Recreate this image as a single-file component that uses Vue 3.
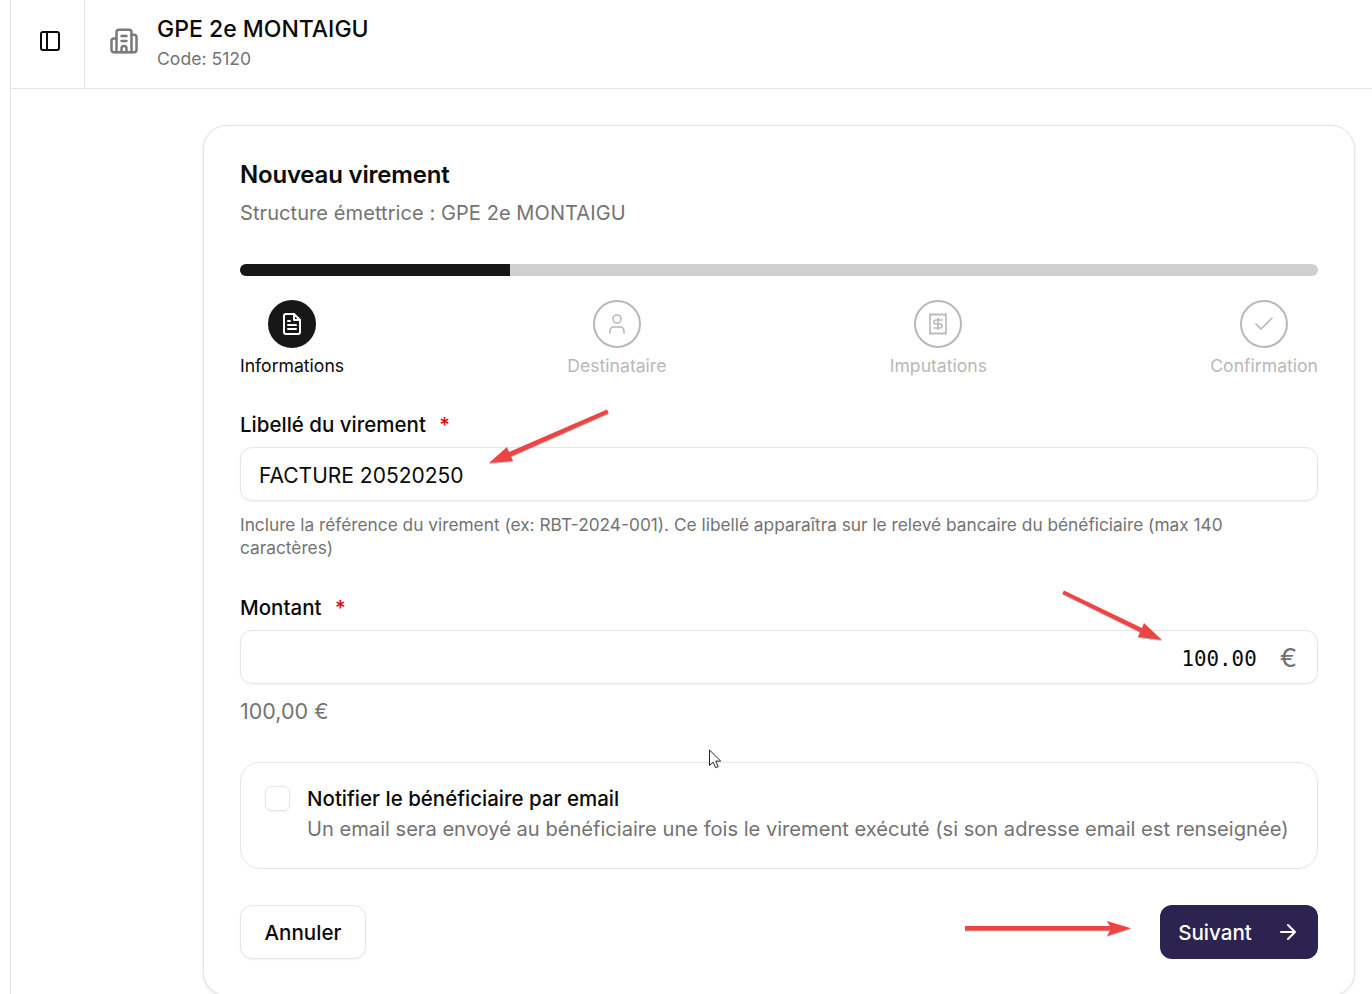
<template>
  <div class="page">
    <div class="main">
      <header class="topbar">
        <button class="toggle" type="button" aria-label="Menu">
          <svg viewBox="0 0 24 24" fill="none" stroke="currentColor" stroke-width="2" stroke-linejoin="round">
            <rect x="3" y="3" width="18" height="18" rx="2" />
            <path d="M9 3v18" />
          </svg>
        </button>
        <div class="structure">
          <svg class="structure-icon" viewBox="0 0 24 24" fill="none" stroke="currentColor" stroke-width="2" stroke-linecap="round" stroke-linejoin="round">
            <path d="M10 12h4" />
            <path d="M10 8h4" />
            <path d="M14 21v-3a2 2 0 0 0-4 0v3" />
            <path d="M6 10H4a2 2 0 0 0-2 2v7a2 2 0 0 0 2 2h16a2 2 0 0 0 2-2V9a2 2 0 0 0-2-2h-2" />
            <path d="M6 21V5a2 2 0 0 1 2-2h8a2 2 0 0 1 2 2v16" />
          </svg>
          <div>
            <div class="structure-name">GPE 2e MONTAIGU</div>
            <div class="structure-code">Code: 5120</div>
          </div>
        </div>
      </header>

      <div class="content">
        <section class="card">
          <h1>Nouveau virement</h1>
          <p class="subtitle">Structure émettrice : GPE 2e MONTAIGU</p>

          <div class="progress">
            <div class="progress-fill" :style="{ width: progress + '%' }"></div>
          </div>

          <div class="steps">
            <div v-for="(step, i) in steps" :key="step.label" class="step" :class="{ active: i === current }">
              <span class="step-circle">
                <svg viewBox="0 0 24 24" fill="none" stroke="currentColor" stroke-linecap="round" stroke-linejoin="round">
                  <path v-for="d in step.paths" :key="d" :d="d" />
                </svg>
              </span>
              <span class="step-label">{{ step.label }}</span>
            </div>
          </div>

          <div class="field first">
            <label>Libellé du virement <span class="req">*</span></label>
            <div class="input">FACTURE 20520250</div>
            <p class="hint">Inclure la référence du virement (ex: RBT-2024-001). Ce libellé apparaîtra sur le relevé bancaire du bénéficiaire (max 140 caractères)</p>
          </div>

          <div class="field amount">
            <label>Montant <span class="req">*</span></label>
            <div class="input input-amount">
              <span class="amount-value">100.00</span>
              <span class="euro">€</span>
            </div>
            <p class="amount-preview">100,00 €</p>
          </div>

          <div class="notify">
            <span class="checkbox"></span>
            <div>
              <div class="notify-title">Notifier le bénéficiaire par email</div>
              <div class="notify-desc">Un email sera envoyé au bénéficiaire une fois le virement exécuté (si son adresse email est renseignée)</div>
            </div>
          </div>

          <div class="actions">
            <button class="btn-cancel" type="button">Annuler</button>
            <button class="btn-next" type="button">
              Suivant
              <svg viewBox="0 0 24 24" fill="none" stroke="currentColor" stroke-width="2" stroke-linecap="round" stroke-linejoin="round">
                <path d="M5 12h14M12 5l7 7-7 7" />
              </svg>
            </button>
          </div>
        </section>
      </div>
    </div>

    <!-- annotations posees sur la capture -->
    <svg class="marks" viewBox="0 0 1372 994">
      <g class="arrows" fill="#ef4444">
        <path d="M607 409.5l1.7 3.7-97.7 43.3 2 4.5-24 2 18-16 2 5z" />
        <path d="M1064 590.5l-1.7 3.2 77.7 38.3-2 5 24 3-18-17-2 5z" />
        <path d="M965 926h145l-3-5 24 7.3-24 7.7 3-5.5H965z" />
      </g>
      <path d="M709.5 750v15.5l3.6-3.4 2.5 5.6 2.6-1.1-2.5-5.5h5z" fill="#fff" stroke="#222" stroke-width="1" stroke-linejoin="round" />
    </svg>
  </div>
</template>

<script setup>
const current = 0
const progress = 25

const steps = [
  {
    label: 'Informations',
    paths: [
      'M14 2H6a2 2 0 0 0-2 2v16a2 2 0 0 0 2 2h12a2 2 0 0 0 2-2V8z',
      'M14 2v6h6',
      'M10 9H8',
      'M16 13H8',
      'M16 17H8'
    ]
  },
  {
    label: 'Destinataire',
    paths: ['M12 3a4 4 0 1 0 0 8 4 4 0 0 0 0-8z', 'M19 21v-2a4 4 0 0 0-4-4H9a4 4 0 0 0-4 4v2']
  },
  {
    label: 'Imputations',
    paths: [
      'M4 2v20l2-1 2 1 2-1 2 1 2-1 2 1 2-1 2 1V2l-2 1-2-1-2 1-2-1-2 1-2-1-2 1z',
      'M16 8h-6a2 2 0 1 0 0 4h4a2 2 0 1 1 0 4H8',
      'M12 17.5v-11'
    ]
  },
  {
    label: 'Confirmation',
    paths: ['M20 6 9 17l-5-5']
  }
]
</script>

<style>
html,
body {
  margin: 0;
  background: #fff;
  overflow: hidden;
}
</style>

<style scoped>
.page {
  position: relative;
  width: 1372px;
  height: 994px;
  overflow: hidden;
  background: #fff;
  padding-left: 10px;
  box-sizing: border-box;
  font-family: Inter, "Liberation Sans", sans-serif;
  color: #0a0a0a;
}

.main {
  height: 100%;
  border-left: 1px solid #e5e5e5;
}

.topbar {
  display: flex;
  height: 89px;
  box-sizing: border-box;
  border-bottom: 1px solid #e5e5e5;
}

.toggle {
  width: 74px;
  padding: 0 0 6px 4px;
  border: 0;
  border-right: 1px solid #e5e5e5;
  background: transparent;
  color: #0a0a0a;
  display: grid;
  place-items: center;
}

.toggle svg {
  width: 24px;
  height: 24px;
}

.structure {
  display: flex;
  align-items: center;
  gap: 18px;
  padding: 0 0 2px 24px;
}

.structure-icon {
  width: 30px;
  height: 30px;
  color: #7a7a7a;
  margin-bottom: 4px;
}

.structure-name {
  font-size: 23px;
  line-height: 32px;
  font-weight: 500;
}

.structure-code {
  font-size: 17.6px;
  line-height: 28px;
  color: #737373;
}

.content {
  padding: 36px 17px 0 192px;
}

.card {
  width: 1152px;
  box-sizing: border-box;
  padding: 35px 36px 36px;
  border: 1px solid #e5e5e5;
  border-radius: 24px;
  background: #fff;
  box-shadow: 0 1px 3px rgba(0, 0, 0, 0.1);
}

h1 {
  margin: 0;
  font-size: 24px;
  line-height: 28px;
  font-weight: 600;
  letter-spacing: -0.2px;
}

.subtitle {
  margin: 10px 0 0;
  font-size: 20px;
  line-height: 28px;
  letter-spacing: 0.08px;
  color: #737373;
}

.progress {
  margin-top: 37px;
  height: 12px;
  border-radius: 6px;
  background: #cfcfcf;
  overflow: hidden;
}

.progress-fill {
  height: 100%;
  background: #171717;
}

.steps {
  display: flex;
  justify-content: space-between;
  margin-top: 24px;
}

.step {
  display: flex;
  flex-direction: column;
  align-items: center;
  gap: 4px;
  color: #b8b8b8;
}

.step-circle {
  width: 48px;
  height: 48px;
  box-sizing: border-box;
  border: 2.5px solid #b8b8b8;
  border-radius: 50%;
  display: grid;
  place-items: center;
}

.step-circle svg {
  width: 24px;
  height: 24px;
  stroke-width: 1.6;
}

.step.active {
  color: #0a0a0a;
}

.step.active .step-circle {
  border-color: #171717;
  background: #171717;
  color: #fff;
}

.step.active svg {
  stroke-width: 2;
}

.step-label {
  font-size: 17.6px;
  line-height: 28px;
}

.field.first {
  margin-top: 31px;
}

.field.amount {
  margin-top: 35px;
}

label {
  display: block;
  font-size: 20.5px;
  line-height: 28px;
  font-weight: 500;
}

.req {
  margin-left: 8px;
  color: #e7000b;
}

.input {
  margin-top: 8px;
  height: 54px;
  box-sizing: border-box;
  padding: 2px 20px 0 18px;
  border: 1px solid #e5e5e5;
  border-radius: 12px;
  box-shadow: 0 1px 2px rgba(0, 0, 0, 0.05);
  display: flex;
  align-items: center;
  font-size: 21px;
}

.input-amount {
  justify-content: flex-end;
}

.amount-value {
  padding-top: 2px;
  font-family: "DejaVu Sans Mono", monospace;
  font-size: 20.8px;
}

.euro {
  margin-left: 23px;
  padding-bottom: 2px;
  font-size: 26px;
  color: #737373;
}

.hint {
  margin: 12px 0 0;
  font-size: 17.3px;
  line-height: 23px;
  color: #737373;
}

.amount-preview {
  margin: 12px 0 0;
  font-size: 21.5px;
  line-height: 30px;
  color: #737373;
}

.notify {
  margin-top: 36px;
  height: 107px;
  box-sizing: border-box;
  padding: 22px 24px;
  border: 1px solid #e5e5e5;
  border-radius: 20px;
  display: flex;
  gap: 17px;
}

.checkbox {
  flex-shrink: 0;
  width: 25px;
  height: 25px;
  margin-top: 1px;
  box-sizing: border-box;
  border: 1px solid #e5e5e5;
  border-radius: 6px;
  box-shadow: 0 1px 2px rgba(0, 0, 0, 0.05);
}

.notify-title {
  font-size: 20.5px;
  line-height: 28px;
  font-weight: 500;
}

.notify-desc {
  margin-top: 2px;
  font-size: 20.12px;
  line-height: 28px;
  color: #737373;
}

.actions {
  display: flex;
  justify-content: space-between;
  margin-top: 36px;
}

.actions button {
  height: 54px;
  box-sizing: border-box;
  border-radius: 12px;
  font-family: inherit;
  font-size: 20.6px;
  font-weight: 500;
}

.btn-cancel {
  width: 126px;
  border: 1px solid #e5e5e5;
  background: #fff;
  color: #0a0a0a;
  box-shadow: 0 1px 2px rgba(0, 0, 0, 0.05);
}

.btn-next {
  width: 158px;
  border: 0;
  background: #2c2350;
  color: #fff;
  display: flex;
  align-items: center;
  justify-content: center;
  gap: 24px;
}

.btn-next svg {
  width: 24px;
  height: 24px;
}

.marks {
  position: absolute;
  inset: 0;
  width: 1372px;
  height: 994px;
  pointer-events: none;
}

.arrows {
  filter: drop-shadow(0 1px 0 rgba(0, 0, 0, 0.25));
}
</style>
